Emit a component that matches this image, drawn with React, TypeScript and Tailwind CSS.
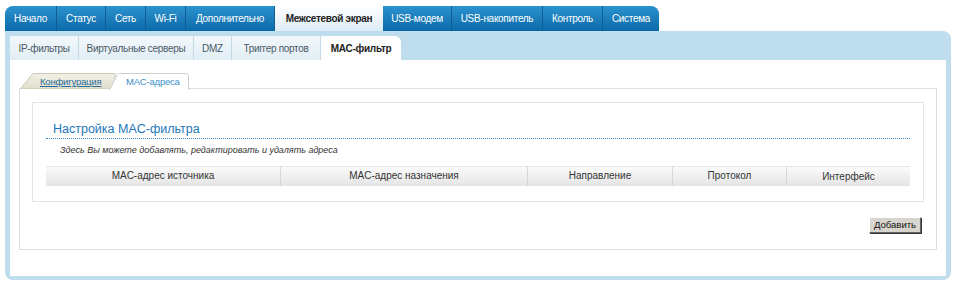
const TOP_TABS = [
  { label: "Начало", w: 52 },
  { label: "Статус", w: 49 },
  { label: "Сеть", w: 40 },
  { label: "Wi-Fi", w: 40 },
  { label: "Дополнительно", w: 89 },
  { label: "Межсетевой экран", w: 108, active: true },
  { label: "USB-модем", w: 69 },
  { label: "USB-накопитель", w: 91 },
  { label: "Контроль", w: 60 },
  { label: "Система", w: 56 },
];

const SUB_TABS = [
  { label: "IP-фильтры", w: 69 },
  { label: "Виртуальные серверы", w: 115 },
  { label: "DMZ", w: 38 },
  { label: "Триггер портов", w: 89 },
  { label: "MAC-фильтр", w: 80, active: true },
];

const COLUMNS = [
  { label: "MAC-адрес источника", w: 235 },
  { label: "MAC-адрес назначения", w: 247 },
  { label: "Направление", w: 145 },
  { label: "Протокол", w: 114 },
  { label: "Интерфейс", w: 123, low: true },
];

function TopNav() {
  return (
    <div className="ml-[5px] mt-[6px] flex h-[25px]">
      {TOP_TABS.map((t, i) => (
        <div
          key={t.label}
          style={{ width: t.w }}
          className={
            "flex shrink-0 items-center justify-center whitespace-nowrap text-[10px] tracking-[-0.3px] " +
            (t.active
              ? "bg-gradient-to-b from-[#ffffff] to-[#dcecf5] font-bold text-[#222]"
              : "border-r border-[#0c5e94] bg-gradient-to-b from-[#2b93cf] to-[#0a69a8] text-white") +
            (i === 0 ? " rounded-tl-[8px]" : "") +
            (i === TOP_TABS.length - 1 ? " rounded-tr-[8px] border-r-0" : "")
          }
        >
          {t.label}
        </div>
      ))}
    </div>
  );
}

function SubNav() {
  return (
    <div className="flex h-[29px] items-end">
      {SUB_TABS.map((t) => (
        <div
          key={t.label}
          style={{ width: t.w }}
          className={
            "flex h-[24px] shrink-0 items-center justify-center whitespace-nowrap text-[10px] tracking-[-0.3px] " +
            (t.active
              ? "rounded-tr-[6px] bg-white font-bold text-[#222]"
              : "border-r border-[#c3d9e5] bg-gradient-to-b from-[#f3f8fb] to-[#e1eef5] text-[#4a5a66]")
          }
        >
          {t.label}
        </div>
      ))}
    </div>
  );
}

function InnerTabs() {
  return (
    <div className="relative flex h-[16px] pl-[1px]">
      <div className="relative h-[16px] w-[96px] shrink-0">
        <svg className="absolute inset-0" width="96" height="16" viewBox="0 0 96 16">
          <defs>
            <linearGradient id="cfg" x1="0" y1="0" x2="0" y2="1">
              <stop offset="0" stopColor="#f3f1e6" />
              <stop offset="1" stopColor="#e0ddca" />
            </linearGradient>
          </defs>
          <path d="M0.5 16 L12 1.5 Q13 0.5 14.5 0.5 L95 0.5 L95 16 Z" fill="url(#cfg)" stroke="#c9c6b4" />
        </svg>
        <span className="absolute left-[20px] top-[3px] whitespace-nowrap text-[9.5px] leading-[12px] tracking-[-0.2px] text-[#2a6e9e] underline">
          Конфигурация
        </span>
      </div>
      <div className="relative -ml-[7px] h-[17px] w-[81px] shrink-0">
        <svg className="absolute inset-0" width="81" height="17" viewBox="0 0 81 17">
          <path d="M0.5 17 L8.5 1.5 Q9.2 0.5 10.5 0.5 L77 0.5 Q79.5 0.5 79.5 3 L79.5 17" fill="#ffffff" stroke="#cfcfcf" />
        </svg>
        <span className="absolute left-[17px] top-[3px] whitespace-nowrap text-[9.5px] leading-[12px] tracking-[-0.2px] text-[#3b8fc9]">
          MAC-адреса
        </span>
      </div>
    </div>
  );
}

export default function App() {
  return (
    <div className="h-[290px] w-[956px] overflow-hidden bg-white font-['Liberation_Sans',Arial,sans-serif]">
      <TopNav />
      <div className="ml-[5px] w-[946px] rounded-b-[8px] rounded-tr-[8px] bg-[#bedeed] px-[5px] pb-[4px]">
        <SubNav />
        <div className="h-[216px] bg-white px-[9px] pt-[13px]">
          <InnerTabs />
          <div className="-mt-px h-[162px] border border-[#dedede] px-[12px] pt-[13px]">
            <div className="h-[100px] border border-[#e3e3e3] px-[13px] pt-[18px]">
              <div className="border-b border-dotted border-[#3b8fc9] pb-[1px] pl-[7px] text-[12.5px] leading-[16px] text-[#1d77b9]">
                Настройка MAC-фильтра
              </div>
              <div className="pl-[14px] pt-[5px] text-[9px] italic leading-[12px] text-[#333]">
                Здесь Вы можете добавлять, редактировать и удалять адреса
              </div>
              <div className="mt-[10px] flex h-[20px] border-t border-[#e6e6e6] bg-gradient-to-b from-[#fbfbfb] to-[#e4e4e4]">
                {COLUMNS.map((c, i) => (
                  <div
                    key={c.label}
                    style={{ width: c.w }}
                    className={
                      "flex shrink-0 justify-center whitespace-nowrap text-[10px] text-[#333] " +
                      (c.low ? "items-end pb-[2px]" : "items-center pb-[3px]") +
                      (i < COLUMNS.length - 1 ? " border-r border-[#d6d6d6]" : "")
                    }
                  >
                    {c.label}
                  </div>
                ))}
              </div>
            </div>
            <div className="flex justify-end pr-[3px] pt-[15px]">
              <button className="h-[16px] whitespace-nowrap border border-b-[#666] border-l-[#fff] border-r-[#666] border-t-[#fff] bg-[#d8d5ce] px-[4px] text-[9.5px] leading-[12px] text-[#111] shadow-[1px_1px_0_#333]">
                Добавить
              </button>
            </div>
          </div>
        </div>
      </div>
    </div>
  );
}
